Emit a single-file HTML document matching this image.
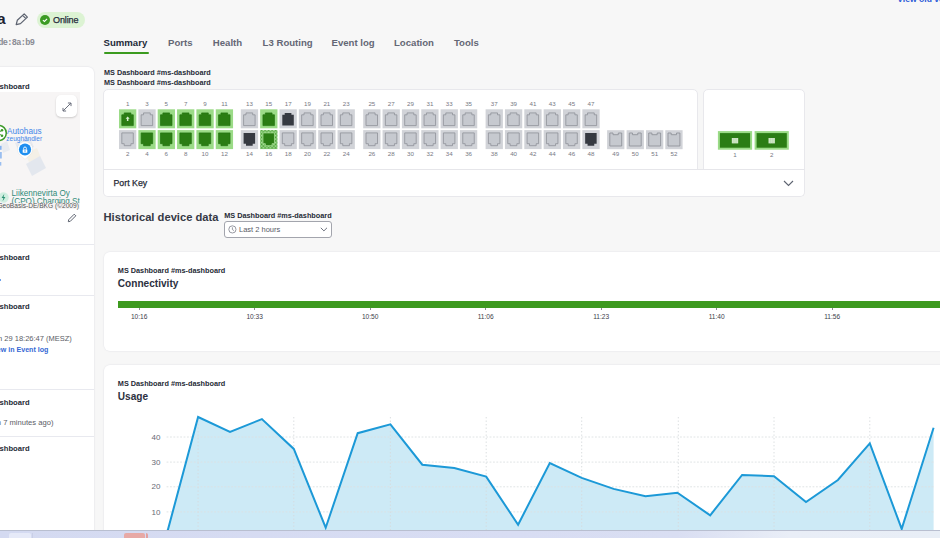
<!DOCTYPE html>
<html><head><meta charset="utf-8"><style>
html,body{margin:0;padding:0;width:940px;height:538px;overflow:hidden;background:#f7f7f7;font-family:'Liberation Sans', sans-serif;}
.t{position:absolute;white-space:nowrap;}
</style></head><body>
<div class="t" style="left:-3.00px;top:10.93px;font-size:15.5px;line-height:15.5px;color:#1c2230;font-weight:700;font-family:'Liberation Sans', sans-serif;">a</div><svg style="position:absolute;left:14px;top:12px" width="16" height="16" viewBox="0 0 16 16">
<path d="M2.2 12.6 L3.3 8.3 L10.2 1.9 L13.4 5.1 L6.5 11.6 Z M8.7 3.4 L11.9 6.6" fill="none" stroke="#5d6370" stroke-width="1.25" stroke-linejoin="round"/></svg><div style="position:absolute;left:37.00px;top:12.00px;width:48.00px;height:15.50px;background:#dcf3d3;border-radius:8px;"></div><svg style="position:absolute;left:39.5px;top:14.7px" width="10" height="10" viewBox="0 0 10 10">
<circle cx="5" cy="5" r="5" fill="#3b9b23"/><path d="M2.9 5.2 L4.4 6.5 L7.1 3.9" fill="none" stroke="#fff" stroke-width="1.1"/></svg><div class="t" style="left:53.00px;top:15.75px;font-size:9px;line-height:9px;color:#23283a;font-weight:400;font-family:'Liberation Sans', sans-serif;letter-spacing:-0.1px;-webkit-text-stroke:0.25px #23283a;">Online</div><div class="t" style="left:-15.20px;top:39.29px;font-size:8.6px;line-height:8.6px;color:#8a8c94;font-weight:700;font-family:'Liberation Mono', monospace;letter-spacing:-0.66px;">f6:de:8a:b9</div><div class="t" style="left:897.20px;top:-5.01px;font-size:8.6px;line-height:8.6px;color:#2a5ad8;font-weight:700;font-family:'Liberation Sans', sans-serif;">View old version</div><div class="t" style="left:103.50px;top:38.04px;font-size:9.6px;line-height:9.6px;color:#242a38;font-weight:700;font-family:'Liberation Sans', sans-serif;">Summary</div><div class="t" style="left:168.00px;top:38.04px;font-size:9.6px;line-height:9.6px;color:#646775;font-weight:700;font-family:'Liberation Sans', sans-serif;">Ports</div><div class="t" style="left:212.80px;top:38.04px;font-size:9.6px;line-height:9.6px;color:#646775;font-weight:700;font-family:'Liberation Sans', sans-serif;">Health</div><div class="t" style="left:262.60px;top:38.04px;font-size:9.6px;line-height:9.6px;color:#646775;font-weight:700;font-family:'Liberation Sans', sans-serif;">L3 Routing</div><div class="t" style="left:331.50px;top:38.04px;font-size:9.6px;line-height:9.6px;color:#646775;font-weight:700;font-family:'Liberation Sans', sans-serif;">Event log</div><div class="t" style="left:394.00px;top:38.04px;font-size:9.6px;line-height:9.6px;color:#646775;font-weight:700;font-family:'Liberation Sans', sans-serif;">Location</div><div class="t" style="left:453.90px;top:38.04px;font-size:9.6px;line-height:9.6px;color:#646775;font-weight:700;font-family:'Liberation Sans', sans-serif;">Tools</div><div style="position:absolute;left:103.90px;top:51.60px;width:44.70px;height:2.20px;background:#3b9b1f;border-radius:1.1px;"></div><div style="position:absolute;left:-10.00px;top:67.00px;width:103.90px;height:480.00px;background:#fff;border-radius:6px;box-shadow:0 0 0 0.5px #e9e9ee,0 0 3px rgba(0,0,0,0.05);"></div><div class="t" style="left:-23.60px;top:82.94px;font-size:7.6px;line-height:7.6px;color:#262b36;font-weight:700;font-family:'Liberation Sans', sans-serif;">MS Dashboard</div><div style="position:absolute;left:0.00px;top:92.00px;width:79.80px;height:117.00px;background:#f7f5f5;overflow:hidden;"></div><svg style="position:absolute;left:0;top:92px" width="80" height="117" viewBox="0 92 80 117">
<polygon points="15,143 30,138 34,147 19,152" fill="#e6e9ef"/>
<polygon points="1,144 7,141 10,150 3,153" fill="#e8ebf0"/>
<polygon points="25,153 37,148 41,158 29,162" fill="#f4f0e6"/>
<polygon points="26,164 40,156 46,168 32,176" fill="#e3e7ee"/>
<rect x="0" y="145.8" width="1.6" height="4" fill="#5c9aec" opacity="0.75"/>
<rect x="0" y="152" width="1.8" height="6.5" fill="#5c9aec" opacity="0.6"/>
<rect x="0" y="162" width="1.3" height="3.6" fill="#5c9aec" opacity="0.6"/>
</svg><div style="position:absolute;left:55.60px;top:94.70px;width:21.60px;height:22.30px;background:#fff;border-radius:5px;box-shadow:0 1px 2px rgba(0,0,0,0.18);"></div><svg style="position:absolute;left:60.5px;top:100.5px" width="12" height="12" viewBox="0 0 12 12">
<path d="M2 10 L10 2 M6.9 2 H10 V5.1 M2 6.9 V10 H5.1" fill="none" stroke="#6a6f7c" stroke-width="1"/></svg><div class="t" style="left:7.00px;top:127.63px;font-size:8.2px;line-height:8.2px;color:#3f86e8;font-weight:400;font-family:'Liberation Sans', sans-serif;">Autohaus</div><div class="t" style="left:6.30px;top:135.67px;font-size:6.5px;line-height:6.5px;color:#3f86e8;font-weight:400;font-family:'Liberation Sans', sans-serif;">zeughändler</div><svg style="position:absolute;left:-10px;top:124px" width="18" height="18" viewBox="0 0 18 18">
<circle cx="8.7" cy="9" r="7.6" fill="#fff" stroke="#3d9a2a" stroke-width="1.5"/>
<circle cx="12" cy="6.3" r="1.3" fill="#3d9a2a"/><circle cx="12" cy="11.7" r="1.3" fill="#3d9a2a"/><circle cx="8" cy="9" r="1.3" fill="#3d9a2a"/>
<path d="M8 9 L12 6.3 M8 9 L12 11.7" stroke="#3d9a2a" stroke-width="0.9"/></svg><svg style="position:absolute;left:16.4px;top:140.7px" width="18" height="19" viewBox="0 0 18 19">
<path d="M9 18.3 L3.6 13.6 A7.6 7.6 0 1 1 14.4 13.6 Z" fill="#fff" stroke="rgba(0,0,0,0.08)" stroke-width="0.6"/>
<circle cx="9" cy="8.5" r="6.1" fill="#1e8ff0"/>
<rect x="6.7" y="8.4" width="4.6" height="3.4" rx="0.4" fill="#fff"/><path d="M7.6 8.5 V7.4 A1.4 1.4 0 0 1 10.4 7.4 V8.5" fill="none" stroke="#fff" stroke-width="0.9"/>
<rect x="8" y="9.6" width="2" height="0.8" fill="#1e8ff0"/></svg><svg style="position:absolute;left:-2.1px;top:191.8px" width="11" height="11" viewBox="0 0 11 11">
<circle cx="5.5" cy="5.5" r="5.2" fill="#cfeee0"/><path d="M6.3 1.8 L3.6 6 H5.4 L4.6 9.2 L7.4 5 H5.6 Z" fill="#2b8f72"/></svg><div class="t" style="left:11.60px;top:190.17px;font-size:8.15px;line-height:8.15px;color:#2e8a78;font-weight:400;font-family:'Liberation Sans', sans-serif;">Liikennevirta Oy</div><div style="position:absolute;left:0;top:190px;width:79.8px;height:19px;overflow:hidden"><div class="t" style="left:11.6px;top:7.97px;font-size:8.15px;line-height:8.15px;color:#2e8a78;font-family:'Liberation Sans', sans-serif">(CPO) Charging Station</div></div><div style="position:absolute;left:0.00px;top:202.60px;width:79.80px;height:6.60px;background:#f5f4f4;"></div><div class="t" style="left:-2.60px;top:202.79px;font-size:6.6px;line-height:6.6px;color:#555;font-weight:400;font-family:'Liberation Sans', sans-serif;">GeoBasis-DE/BKG (©2009)</div><svg style="position:absolute;left:66.5px;top:213px" width="10" height="10" viewBox="0 0 10 10">
<path d="M7.2 1.2 L8.8 2.8 L3.3 8.3 L1.3 8.7 L1.7 6.7 Z" fill="none" stroke="#5d6370" stroke-width="1"/></svg><div style="position:absolute;left:0.00px;top:244.00px;width:93.90px;height:1.20px;background:#e8e9ef;"></div><div style="position:absolute;left:0.00px;top:295.00px;width:93.90px;height:1.20px;background:#e8e9ef;"></div><div style="position:absolute;left:0.00px;top:388.60px;width:93.90px;height:1.20px;background:#e8e9ef;"></div><div style="position:absolute;left:0.00px;top:435.60px;width:93.90px;height:1.20px;background:#e8e9ef;"></div><div class="t" style="left:-23.60px;top:253.54px;font-size:7.6px;line-height:7.6px;color:#262b36;font-weight:700;font-family:'Liberation Sans', sans-serif;">MS Dashboard</div><div class="t" style="left:-23.60px;top:303.34px;font-size:7.6px;line-height:7.6px;color:#262b36;font-weight:700;font-family:'Liberation Sans', sans-serif;">MS Dashboard</div><div class="t" style="left:-23.60px;top:398.54px;font-size:7.6px;line-height:7.6px;color:#262b36;font-weight:700;font-family:'Liberation Sans', sans-serif;">MS Dashboard</div><div class="t" style="left:-23.60px;top:444.84px;font-size:7.6px;line-height:7.6px;color:#262b36;font-weight:700;font-family:'Liberation Sans', sans-serif;">MS Dashboard</div><div style="position:absolute;left:-1.00px;top:278.80px;width:2.20px;height:2.20px;background:#3d83e6;border-radius:1px;"></div><div class="t" style="left:-9.90px;top:335.23px;font-size:7.5px;line-height:7.5px;color:#5a5c66;font-weight:400;font-family:'Liberation Sans', sans-serif;">Jun 29 18:26:47 (MESZ)</div><div class="t" style="left:-9.80px;top:346.66px;font-size:7.1px;line-height:7.1px;color:#3568d4;font-weight:700;font-family:'Liberation Sans', sans-serif;">View in Event log</div><div class="t" style="left:-34.40px;top:418.94px;font-size:7.6px;line-height:7.6px;color:#5a5c66;font-weight:400;font-family:'Liberation Sans', sans-serif;">(Last seen 7 minutes ago)</div><div class="t" style="left:104.00px;top:68.64px;font-size:7.25px;line-height:7.25px;color:#262b36;font-weight:700;font-family:'Liberation Sans', sans-serif;">MS Dashboard #ms-dashboard</div><div class="t" style="left:104.00px;top:78.74px;font-size:7.25px;line-height:7.25px;color:#262b36;font-weight:700;font-family:'Liberation Sans', sans-serif;">MS Dashboard #ms-dashboard</div><div style="position:absolute;left:103.40px;top:89.00px;width:594.80px;height:80.70px;background:#fff;border:1px solid #e8e8ec;border-radius:5px 5px 0 0;box-sizing:border-box;"></div><div style="position:absolute;left:703.40px;top:89.00px;width:101.40px;height:80.70px;background:#fff;border:1px solid #e8e8ec;border-radius:5px 5px 0 0;box-sizing:border-box;"></div><div style="position:absolute;left:103.40px;top:169.20px;width:701.40px;height:27.60px;background:#fff;border:1px solid #e8e8ec;border-top:1px solid #e6e6ea;border-radius:0 0 5px 5px;box-sizing:border-box;"></div><div class="t" style="left:113.50px;top:178.72px;font-size:8.8px;line-height:8.8px;color:#262a36;font-weight:400;font-family:'Liberation Sans', sans-serif;-webkit-text-stroke:0.25px #262a36;">Port Key</div><svg style="position:absolute;left:782.5px;top:179.5px" width="11" height="7" viewBox="0 0 11 7">
<path d="M1 1 L5.5 5.5 L10 1" fill="none" stroke="#5d6370" stroke-width="1.1"/></svg><svg style="position:absolute;left:0;top:0" width="940" height="200" viewBox="0 0 940 200"><defs><pattern id="hat" width="1.4" height="1.4" patternUnits="userSpaceOnUse"><rect width="1.4" height="1.4" fill="#3f9a2a"/><rect width="0.7" height="0.7" fill="#b5e6a5"/><rect x="0.7" y="0.7" width="0.7" height="0.7" fill="#b5e6a5"/></pattern></defs><rect x="119.00" y="109.30" width="17.3" height="19.0" fill="#9bdb87"/><path d="M121.80 114.80 H124.20 V112.90 H130.90 V114.80 H133.30 V125.60 H121.80 Z" fill="#2b7d14" stroke="#237410" stroke-width="0.7"/><rect x="119.00" y="130.10" width="17.3" height="19.0" fill="#d1d3d8"/><path d="M121.80 132.90 H133.30 V143.70 H130.90 V145.70 H124.20 V143.70 H121.80 Z" fill="#c6c9cf" stroke="#8e9198" stroke-width="0.8"/><rect x="138.35" y="109.30" width="17.3" height="19.0" fill="#d1d3d8"/><path d="M141.15 114.80 H143.55 V112.90 H150.25 V114.80 H152.65 V125.60 H141.15 Z" fill="#c6c9cf" stroke="#8e9198" stroke-width="0.8"/><rect x="138.35" y="130.10" width="17.3" height="19.0" fill="#9bdb87"/><path d="M141.15 132.90 H152.65 V143.70 H150.25 V145.70 H143.55 V143.70 H141.15 Z" fill="#2b7d14" stroke="#237410" stroke-width="0.7"/><rect x="157.70" y="109.30" width="17.3" height="19.0" fill="#9bdb87"/><path d="M160.50 114.80 H162.90 V112.90 H169.60 V114.80 H172.00 V125.60 H160.50 Z" fill="#2b7d14" stroke="#237410" stroke-width="0.7"/><rect x="157.70" y="130.10" width="17.3" height="19.0" fill="#9bdb87"/><path d="M160.50 132.90 H172.00 V143.70 H169.60 V145.70 H162.90 V143.70 H160.50 Z" fill="#2b7d14" stroke="#237410" stroke-width="0.7"/><rect x="177.05" y="109.30" width="17.3" height="19.0" fill="#9bdb87"/><path d="M179.85 114.80 H182.25 V112.90 H188.95 V114.80 H191.35 V125.60 H179.85 Z" fill="#2b7d14" stroke="#237410" stroke-width="0.7"/><rect x="177.05" y="130.10" width="17.3" height="19.0" fill="#9bdb87"/><path d="M179.85 132.90 H191.35 V143.70 H188.95 V145.70 H182.25 V143.70 H179.85 Z" fill="#2b7d14" stroke="#237410" stroke-width="0.7"/><rect x="196.40" y="109.30" width="17.3" height="19.0" fill="#9bdb87"/><path d="M199.20 114.80 H201.60 V112.90 H208.30 V114.80 H210.70 V125.60 H199.20 Z" fill="#2b7d14" stroke="#237410" stroke-width="0.7"/><rect x="196.40" y="130.10" width="17.3" height="19.0" fill="#9bdb87"/><path d="M199.20 132.90 H210.70 V143.70 H208.30 V145.70 H201.60 V143.70 H199.20 Z" fill="#2b7d14" stroke="#237410" stroke-width="0.7"/><rect x="215.75" y="109.30" width="17.3" height="19.0" fill="#9bdb87"/><path d="M218.55 114.80 H220.95 V112.90 H227.65 V114.80 H230.05 V125.60 H218.55 Z" fill="#2b7d14" stroke="#237410" stroke-width="0.7"/><rect x="215.75" y="130.10" width="17.3" height="19.0" fill="#9bdb87"/><path d="M218.55 132.90 H230.05 V143.70 H227.65 V145.70 H220.95 V143.70 H218.55 Z" fill="#2b7d14" stroke="#237410" stroke-width="0.7"/><rect x="240.80" y="109.30" width="17.3" height="19.0" fill="#d1d3d8"/><path d="M243.60 114.80 H246.00 V112.90 H252.70 V114.80 H255.10 V125.60 H243.60 Z" fill="#c6c9cf" stroke="#8e9198" stroke-width="0.8"/><rect x="240.80" y="130.10" width="17.3" height="19.0" fill="#d1d3d8"/><path d="M243.60 132.90 H255.10 V143.70 H252.70 V145.70 H246.00 V143.70 H243.60 Z" fill="#363a41"/><rect x="260.15" y="109.30" width="17.3" height="19.0" fill="#9bdb87"/><path d="M262.95 114.80 H265.35 V112.90 H272.05 V114.80 H274.45 V125.60 H262.95 Z" fill="#2b7d14" stroke="#237410" stroke-width="0.7"/><rect x="260.15" y="130.10" width="17.3" height="19.0" fill="url(#hat)"/><path d="M262.95 132.90 H274.45 V143.70 H272.05 V145.70 H265.35 V143.70 H262.95 Z" fill="#2b7d14" stroke="#a8e096" stroke-width="0.8"/><rect x="279.50" y="109.30" width="17.3" height="19.0" fill="#d1d3d8"/><path d="M282.30 114.80 H284.70 V112.90 H291.40 V114.80 H293.80 V125.60 H282.30 Z" fill="#363a41"/><rect x="279.50" y="130.10" width="17.3" height="19.0" fill="#d1d3d8"/><path d="M282.30 132.90 H293.80 V143.70 H291.40 V145.70 H284.70 V143.70 H282.30 Z" fill="#c6c9cf" stroke="#8e9198" stroke-width="0.8"/><rect x="298.85" y="109.30" width="17.3" height="19.0" fill="#d1d3d8"/><path d="M301.65 114.80 H304.05 V112.90 H310.75 V114.80 H313.15 V125.60 H301.65 Z" fill="#c6c9cf" stroke="#8e9198" stroke-width="0.8"/><rect x="298.85" y="130.10" width="17.3" height="19.0" fill="#d1d3d8"/><path d="M301.65 132.90 H313.15 V143.70 H310.75 V145.70 H304.05 V143.70 H301.65 Z" fill="#c6c9cf" stroke="#8e9198" stroke-width="0.8"/><rect x="318.20" y="109.30" width="17.3" height="19.0" fill="#d1d3d8"/><path d="M321.00 114.80 H323.40 V112.90 H330.10 V114.80 H332.50 V125.60 H321.00 Z" fill="#c6c9cf" stroke="#8e9198" stroke-width="0.8"/><rect x="318.20" y="130.10" width="17.3" height="19.0" fill="#d1d3d8"/><path d="M321.00 132.90 H332.50 V143.70 H330.10 V145.70 H323.40 V143.70 H321.00 Z" fill="#c6c9cf" stroke="#8e9198" stroke-width="0.8"/><rect x="337.55" y="109.30" width="17.3" height="19.0" fill="#d1d3d8"/><path d="M340.35 114.80 H342.75 V112.90 H349.45 V114.80 H351.85 V125.60 H340.35 Z" fill="#c6c9cf" stroke="#8e9198" stroke-width="0.8"/><rect x="337.55" y="130.10" width="17.3" height="19.0" fill="#d1d3d8"/><path d="M340.35 132.90 H351.85 V143.70 H349.45 V145.70 H342.75 V143.70 H340.35 Z" fill="#c6c9cf" stroke="#8e9198" stroke-width="0.8"/><rect x="363.20" y="109.30" width="17.3" height="19.0" fill="#d1d3d8"/><path d="M366.00 114.80 H368.40 V112.90 H375.10 V114.80 H377.50 V125.60 H366.00 Z" fill="#c6c9cf" stroke="#8e9198" stroke-width="0.8"/><rect x="363.20" y="130.10" width="17.3" height="19.0" fill="#d1d3d8"/><path d="M366.00 132.90 H377.50 V143.70 H375.10 V145.70 H368.40 V143.70 H366.00 Z" fill="#c6c9cf" stroke="#8e9198" stroke-width="0.8"/><rect x="382.55" y="109.30" width="17.3" height="19.0" fill="#d1d3d8"/><path d="M385.35 114.80 H387.75 V112.90 H394.45 V114.80 H396.85 V125.60 H385.35 Z" fill="#c6c9cf" stroke="#8e9198" stroke-width="0.8"/><rect x="382.55" y="130.10" width="17.3" height="19.0" fill="#d1d3d8"/><path d="M385.35 132.90 H396.85 V143.70 H394.45 V145.70 H387.75 V143.70 H385.35 Z" fill="#c6c9cf" stroke="#8e9198" stroke-width="0.8"/><rect x="401.90" y="109.30" width="17.3" height="19.0" fill="#d1d3d8"/><path d="M404.70 114.80 H407.10 V112.90 H413.80 V114.80 H416.20 V125.60 H404.70 Z" fill="#c6c9cf" stroke="#8e9198" stroke-width="0.8"/><rect x="401.90" y="130.10" width="17.3" height="19.0" fill="#d1d3d8"/><path d="M404.70 132.90 H416.20 V143.70 H413.80 V145.70 H407.10 V143.70 H404.70 Z" fill="#c6c9cf" stroke="#8e9198" stroke-width="0.8"/><rect x="421.25" y="109.30" width="17.3" height="19.0" fill="#d1d3d8"/><path d="M424.05 114.80 H426.45 V112.90 H433.15 V114.80 H435.55 V125.60 H424.05 Z" fill="#c6c9cf" stroke="#8e9198" stroke-width="0.8"/><rect x="421.25" y="130.10" width="17.3" height="19.0" fill="#d1d3d8"/><path d="M424.05 132.90 H435.55 V143.70 H433.15 V145.70 H426.45 V143.70 H424.05 Z" fill="#c6c9cf" stroke="#8e9198" stroke-width="0.8"/><rect x="440.60" y="109.30" width="17.3" height="19.0" fill="#d1d3d8"/><path d="M443.40 114.80 H445.80 V112.90 H452.50 V114.80 H454.90 V125.60 H443.40 Z" fill="#c6c9cf" stroke="#8e9198" stroke-width="0.8"/><rect x="440.60" y="130.10" width="17.3" height="19.0" fill="#d1d3d8"/><path d="M443.40 132.90 H454.90 V143.70 H452.50 V145.70 H445.80 V143.70 H443.40 Z" fill="#c6c9cf" stroke="#8e9198" stroke-width="0.8"/><rect x="459.95" y="109.30" width="17.3" height="19.0" fill="#d1d3d8"/><path d="M462.75 114.80 H465.15 V112.90 H471.85 V114.80 H474.25 V125.60 H462.75 Z" fill="#c6c9cf" stroke="#8e9198" stroke-width="0.8"/><rect x="459.95" y="130.10" width="17.3" height="19.0" fill="#d1d3d8"/><path d="M462.75 132.90 H474.25 V143.70 H471.85 V145.70 H465.15 V143.70 H462.75 Z" fill="#c6c9cf" stroke="#8e9198" stroke-width="0.8"/><rect x="485.60" y="109.30" width="17.3" height="19.0" fill="#d1d3d8"/><path d="M488.40 114.80 H490.80 V112.90 H497.50 V114.80 H499.90 V125.60 H488.40 Z" fill="#c6c9cf" stroke="#8e9198" stroke-width="0.8"/><rect x="485.60" y="130.10" width="17.3" height="19.0" fill="#d1d3d8"/><path d="M488.40 132.90 H499.90 V143.70 H497.50 V145.70 H490.80 V143.70 H488.40 Z" fill="#c6c9cf" stroke="#8e9198" stroke-width="0.8"/><rect x="504.95" y="109.30" width="17.3" height="19.0" fill="#d1d3d8"/><path d="M507.75 114.80 H510.15 V112.90 H516.85 V114.80 H519.25 V125.60 H507.75 Z" fill="#c6c9cf" stroke="#8e9198" stroke-width="0.8"/><rect x="504.95" y="130.10" width="17.3" height="19.0" fill="#d1d3d8"/><path d="M507.75 132.90 H519.25 V143.70 H516.85 V145.70 H510.15 V143.70 H507.75 Z" fill="#c6c9cf" stroke="#8e9198" stroke-width="0.8"/><rect x="524.30" y="109.30" width="17.3" height="19.0" fill="#d1d3d8"/><path d="M527.10 114.80 H529.50 V112.90 H536.20 V114.80 H538.60 V125.60 H527.10 Z" fill="#c6c9cf" stroke="#8e9198" stroke-width="0.8"/><rect x="524.30" y="130.10" width="17.3" height="19.0" fill="#d1d3d8"/><path d="M527.10 132.90 H538.60 V143.70 H536.20 V145.70 H529.50 V143.70 H527.10 Z" fill="#c6c9cf" stroke="#8e9198" stroke-width="0.8"/><rect x="543.65" y="109.30" width="17.3" height="19.0" fill="#d1d3d8"/><path d="M546.45 114.80 H548.85 V112.90 H555.55 V114.80 H557.95 V125.60 H546.45 Z" fill="#c6c9cf" stroke="#8e9198" stroke-width="0.8"/><rect x="543.65" y="130.10" width="17.3" height="19.0" fill="#d1d3d8"/><path d="M546.45 132.90 H557.95 V143.70 H555.55 V145.70 H548.85 V143.70 H546.45 Z" fill="#c6c9cf" stroke="#8e9198" stroke-width="0.8"/><rect x="563.00" y="109.30" width="17.3" height="19.0" fill="#d1d3d8"/><path d="M565.80 114.80 H568.20 V112.90 H574.90 V114.80 H577.30 V125.60 H565.80 Z" fill="#c6c9cf" stroke="#8e9198" stroke-width="0.8"/><rect x="563.00" y="130.10" width="17.3" height="19.0" fill="#d1d3d8"/><path d="M565.80 132.90 H577.30 V143.70 H574.90 V145.70 H568.20 V143.70 H565.80 Z" fill="#c6c9cf" stroke="#8e9198" stroke-width="0.8"/><rect x="582.35" y="109.30" width="17.3" height="19.0" fill="#d1d3d8"/><path d="M585.15 114.80 H587.55 V112.90 H594.25 V114.80 H596.65 V125.60 H585.15 Z" fill="#c6c9cf" stroke="#8e9198" stroke-width="0.8"/><rect x="582.35" y="130.10" width="17.3" height="19.0" fill="#d1d3d8"/><path d="M585.15 132.90 H596.65 V143.70 H594.25 V145.70 H587.55 V143.70 H585.15 Z" fill="#363a41"/><path d="M127.65 116.50 L125.60 118.70 H126.90 V121.10 H128.40 V118.70 H129.70 Z" fill="#d9f0d0"/><rect x="607.10" y="130.20" width="17.3" height="19.0" fill="#d1d3d8"/><path d="M609.80 133.00 H613.00 V134.70 H618.30 V133.00 H621.70 V146.00 H609.80 Z" fill="#c6c9cf" stroke="#8e9198" stroke-width="0.85"/><rect x="626.60" y="130.20" width="17.3" height="19.0" fill="#d1d3d8"/><path d="M629.30 133.00 H632.50 V134.70 H637.80 V133.00 H641.20 V146.00 H629.30 Z" fill="#c6c9cf" stroke="#8e9198" stroke-width="0.85"/><rect x="646.00" y="130.20" width="17.3" height="19.0" fill="#d1d3d8"/><path d="M648.70 133.00 H651.90 V134.70 H657.20 V133.00 H660.60 V146.00 H648.70 Z" fill="#c6c9cf" stroke="#8e9198" stroke-width="0.85"/><rect x="665.30" y="130.20" width="17.3" height="19.0" fill="#d1d3d8"/><path d="M668.00 133.00 H671.20 V134.70 H676.50 V133.00 H679.90 V146.00 H668.00 Z" fill="#c6c9cf" stroke="#8e9198" stroke-width="0.85"/><rect x="717.90" y="131.10" width="34.2" height="18.6" fill="#9bdb87"/><rect x="719.90" y="133.10" width="30.2" height="14.6" fill="#2b7d14"/><rect x="731.80" y="138.00" width="6.4" height="5.4" fill="#cfe6c6"/><path d="M733.90 138.10 V143.30 M736.10 138.10 V143.30" stroke="#a9cf9c" stroke-width="0.4"/><rect x="754.60" y="131.10" width="34.2" height="18.6" fill="#9bdb87"/><rect x="756.60" y="133.10" width="30.2" height="14.6" fill="#2b7d14"/><rect x="768.50" y="138.00" width="6.4" height="5.4" fill="#cfe6c6"/><path d="M770.60 138.10 V143.30 M772.80 138.10 V143.30" stroke="#a9cf9c" stroke-width="0.4"/></svg><div class="t" style="left:127.65px;transform:translateX(-50%);top:100.83px;font-size:6.2px;line-height:6.2px;color:#777983;font-weight:400;font-family:'Liberation Sans', sans-serif;">1</div><div class="t" style="left:127.65px;transform:translateX(-50%);top:150.93px;font-size:6.2px;line-height:6.2px;color:#777983;font-weight:400;font-family:'Liberation Sans', sans-serif;">2</div><div class="t" style="left:147.00px;transform:translateX(-50%);top:100.83px;font-size:6.2px;line-height:6.2px;color:#777983;font-weight:400;font-family:'Liberation Sans', sans-serif;">3</div><div class="t" style="left:147.00px;transform:translateX(-50%);top:150.93px;font-size:6.2px;line-height:6.2px;color:#777983;font-weight:400;font-family:'Liberation Sans', sans-serif;">4</div><div class="t" style="left:166.35px;transform:translateX(-50%);top:100.83px;font-size:6.2px;line-height:6.2px;color:#777983;font-weight:400;font-family:'Liberation Sans', sans-serif;">5</div><div class="t" style="left:166.35px;transform:translateX(-50%);top:150.93px;font-size:6.2px;line-height:6.2px;color:#777983;font-weight:400;font-family:'Liberation Sans', sans-serif;">6</div><div class="t" style="left:185.70px;transform:translateX(-50%);top:100.83px;font-size:6.2px;line-height:6.2px;color:#777983;font-weight:400;font-family:'Liberation Sans', sans-serif;">7</div><div class="t" style="left:185.70px;transform:translateX(-50%);top:150.93px;font-size:6.2px;line-height:6.2px;color:#777983;font-weight:400;font-family:'Liberation Sans', sans-serif;">8</div><div class="t" style="left:205.05px;transform:translateX(-50%);top:100.83px;font-size:6.2px;line-height:6.2px;color:#777983;font-weight:400;font-family:'Liberation Sans', sans-serif;">9</div><div class="t" style="left:205.05px;transform:translateX(-50%);top:150.93px;font-size:6.2px;line-height:6.2px;color:#777983;font-weight:400;font-family:'Liberation Sans', sans-serif;">10</div><div class="t" style="left:224.40px;transform:translateX(-50%);top:100.83px;font-size:6.2px;line-height:6.2px;color:#777983;font-weight:400;font-family:'Liberation Sans', sans-serif;">11</div><div class="t" style="left:224.40px;transform:translateX(-50%);top:150.93px;font-size:6.2px;line-height:6.2px;color:#777983;font-weight:400;font-family:'Liberation Sans', sans-serif;">12</div><div class="t" style="left:249.45px;transform:translateX(-50%);top:100.83px;font-size:6.2px;line-height:6.2px;color:#777983;font-weight:400;font-family:'Liberation Sans', sans-serif;">13</div><div class="t" style="left:249.45px;transform:translateX(-50%);top:150.93px;font-size:6.2px;line-height:6.2px;color:#777983;font-weight:400;font-family:'Liberation Sans', sans-serif;">14</div><div class="t" style="left:268.80px;transform:translateX(-50%);top:100.83px;font-size:6.2px;line-height:6.2px;color:#777983;font-weight:400;font-family:'Liberation Sans', sans-serif;">15</div><div class="t" style="left:268.80px;transform:translateX(-50%);top:150.93px;font-size:6.2px;line-height:6.2px;color:#777983;font-weight:400;font-family:'Liberation Sans', sans-serif;">16</div><div class="t" style="left:288.15px;transform:translateX(-50%);top:100.83px;font-size:6.2px;line-height:6.2px;color:#777983;font-weight:400;font-family:'Liberation Sans', sans-serif;">17</div><div class="t" style="left:288.15px;transform:translateX(-50%);top:150.93px;font-size:6.2px;line-height:6.2px;color:#777983;font-weight:400;font-family:'Liberation Sans', sans-serif;">18</div><div class="t" style="left:307.50px;transform:translateX(-50%);top:100.83px;font-size:6.2px;line-height:6.2px;color:#777983;font-weight:400;font-family:'Liberation Sans', sans-serif;">19</div><div class="t" style="left:307.50px;transform:translateX(-50%);top:150.93px;font-size:6.2px;line-height:6.2px;color:#777983;font-weight:400;font-family:'Liberation Sans', sans-serif;">20</div><div class="t" style="left:326.85px;transform:translateX(-50%);top:100.83px;font-size:6.2px;line-height:6.2px;color:#777983;font-weight:400;font-family:'Liberation Sans', sans-serif;">21</div><div class="t" style="left:326.85px;transform:translateX(-50%);top:150.93px;font-size:6.2px;line-height:6.2px;color:#777983;font-weight:400;font-family:'Liberation Sans', sans-serif;">22</div><div class="t" style="left:346.20px;transform:translateX(-50%);top:100.83px;font-size:6.2px;line-height:6.2px;color:#777983;font-weight:400;font-family:'Liberation Sans', sans-serif;">23</div><div class="t" style="left:346.20px;transform:translateX(-50%);top:150.93px;font-size:6.2px;line-height:6.2px;color:#777983;font-weight:400;font-family:'Liberation Sans', sans-serif;">24</div><div class="t" style="left:371.85px;transform:translateX(-50%);top:100.83px;font-size:6.2px;line-height:6.2px;color:#777983;font-weight:400;font-family:'Liberation Sans', sans-serif;">25</div><div class="t" style="left:371.85px;transform:translateX(-50%);top:150.93px;font-size:6.2px;line-height:6.2px;color:#777983;font-weight:400;font-family:'Liberation Sans', sans-serif;">26</div><div class="t" style="left:391.20px;transform:translateX(-50%);top:100.83px;font-size:6.2px;line-height:6.2px;color:#777983;font-weight:400;font-family:'Liberation Sans', sans-serif;">27</div><div class="t" style="left:391.20px;transform:translateX(-50%);top:150.93px;font-size:6.2px;line-height:6.2px;color:#777983;font-weight:400;font-family:'Liberation Sans', sans-serif;">28</div><div class="t" style="left:410.55px;transform:translateX(-50%);top:100.83px;font-size:6.2px;line-height:6.2px;color:#777983;font-weight:400;font-family:'Liberation Sans', sans-serif;">29</div><div class="t" style="left:410.55px;transform:translateX(-50%);top:150.93px;font-size:6.2px;line-height:6.2px;color:#777983;font-weight:400;font-family:'Liberation Sans', sans-serif;">30</div><div class="t" style="left:429.90px;transform:translateX(-50%);top:100.83px;font-size:6.2px;line-height:6.2px;color:#777983;font-weight:400;font-family:'Liberation Sans', sans-serif;">31</div><div class="t" style="left:429.90px;transform:translateX(-50%);top:150.93px;font-size:6.2px;line-height:6.2px;color:#777983;font-weight:400;font-family:'Liberation Sans', sans-serif;">32</div><div class="t" style="left:449.25px;transform:translateX(-50%);top:100.83px;font-size:6.2px;line-height:6.2px;color:#777983;font-weight:400;font-family:'Liberation Sans', sans-serif;">33</div><div class="t" style="left:449.25px;transform:translateX(-50%);top:150.93px;font-size:6.2px;line-height:6.2px;color:#777983;font-weight:400;font-family:'Liberation Sans', sans-serif;">34</div><div class="t" style="left:468.60px;transform:translateX(-50%);top:100.83px;font-size:6.2px;line-height:6.2px;color:#777983;font-weight:400;font-family:'Liberation Sans', sans-serif;">35</div><div class="t" style="left:468.60px;transform:translateX(-50%);top:150.93px;font-size:6.2px;line-height:6.2px;color:#777983;font-weight:400;font-family:'Liberation Sans', sans-serif;">36</div><div class="t" style="left:494.25px;transform:translateX(-50%);top:100.83px;font-size:6.2px;line-height:6.2px;color:#777983;font-weight:400;font-family:'Liberation Sans', sans-serif;">37</div><div class="t" style="left:494.25px;transform:translateX(-50%);top:150.93px;font-size:6.2px;line-height:6.2px;color:#777983;font-weight:400;font-family:'Liberation Sans', sans-serif;">38</div><div class="t" style="left:513.60px;transform:translateX(-50%);top:100.83px;font-size:6.2px;line-height:6.2px;color:#777983;font-weight:400;font-family:'Liberation Sans', sans-serif;">39</div><div class="t" style="left:513.60px;transform:translateX(-50%);top:150.93px;font-size:6.2px;line-height:6.2px;color:#777983;font-weight:400;font-family:'Liberation Sans', sans-serif;">40</div><div class="t" style="left:532.95px;transform:translateX(-50%);top:100.83px;font-size:6.2px;line-height:6.2px;color:#777983;font-weight:400;font-family:'Liberation Sans', sans-serif;">41</div><div class="t" style="left:532.95px;transform:translateX(-50%);top:150.93px;font-size:6.2px;line-height:6.2px;color:#777983;font-weight:400;font-family:'Liberation Sans', sans-serif;">42</div><div class="t" style="left:552.30px;transform:translateX(-50%);top:100.83px;font-size:6.2px;line-height:6.2px;color:#777983;font-weight:400;font-family:'Liberation Sans', sans-serif;">43</div><div class="t" style="left:552.30px;transform:translateX(-50%);top:150.93px;font-size:6.2px;line-height:6.2px;color:#777983;font-weight:400;font-family:'Liberation Sans', sans-serif;">44</div><div class="t" style="left:571.65px;transform:translateX(-50%);top:100.83px;font-size:6.2px;line-height:6.2px;color:#777983;font-weight:400;font-family:'Liberation Sans', sans-serif;">45</div><div class="t" style="left:571.65px;transform:translateX(-50%);top:150.93px;font-size:6.2px;line-height:6.2px;color:#777983;font-weight:400;font-family:'Liberation Sans', sans-serif;">46</div><div class="t" style="left:591.00px;transform:translateX(-50%);top:100.83px;font-size:6.2px;line-height:6.2px;color:#777983;font-weight:400;font-family:'Liberation Sans', sans-serif;">47</div><div class="t" style="left:591.00px;transform:translateX(-50%);top:150.93px;font-size:6.2px;line-height:6.2px;color:#777983;font-weight:400;font-family:'Liberation Sans', sans-serif;">48</div><div class="t" style="left:615.75px;transform:translateX(-50%);top:151.23px;font-size:6.2px;line-height:6.2px;color:#777983;font-weight:400;font-family:'Liberation Sans', sans-serif;">49</div><div class="t" style="left:635.25px;transform:translateX(-50%);top:151.23px;font-size:6.2px;line-height:6.2px;color:#777983;font-weight:400;font-family:'Liberation Sans', sans-serif;">50</div><div class="t" style="left:654.65px;transform:translateX(-50%);top:151.23px;font-size:6.2px;line-height:6.2px;color:#777983;font-weight:400;font-family:'Liberation Sans', sans-serif;">51</div><div class="t" style="left:673.95px;transform:translateX(-50%);top:151.23px;font-size:6.2px;line-height:6.2px;color:#777983;font-weight:400;font-family:'Liberation Sans', sans-serif;">52</div><div class="t" style="left:735.00px;transform:translateX(-50%);top:151.73px;font-size:6.2px;line-height:6.2px;color:#777983;font-weight:400;font-family:'Liberation Sans', sans-serif;">1</div><div class="t" style="left:771.70px;transform:translateX(-50%);top:151.73px;font-size:6.2px;line-height:6.2px;color:#777983;font-weight:400;font-family:'Liberation Sans', sans-serif;">2</div><div class="t" style="left:103.50px;top:212.28px;font-size:11.2px;line-height:11.2px;color:#353945;font-weight:700;font-family:'Liberation Sans', sans-serif;">Historical device data</div><div class="t" style="left:224.20px;top:212.19px;font-size:7.3px;line-height:7.3px;color:#262b36;font-weight:700;font-family:'Liberation Sans', sans-serif;">MS Dashboard #ms-dashboard</div><div style="position:absolute;left:224.20px;top:221.00px;width:107.40px;height:16.80px;background:#fff;border:1px solid #a3a5ad;border-radius:3px;box-sizing:border-box;"></div><svg style="position:absolute;left:228.3px;top:224.9px" width="9" height="9" viewBox="0 0 9 9">
<circle cx="4.4" cy="4.4" r="3.6" fill="none" stroke="#7d808a" stroke-width="0.8"/><path d="M4.4 2.3 V4.6 L5.9 5.6" fill="none" stroke="#7d808a" stroke-width="0.8"/></svg><div class="t" style="left:239.00px;top:225.82px;font-size:7.5px;line-height:7.5px;color:#575a66;font-weight:400;font-family:'Liberation Sans', sans-serif;">Last 2 hours</div><svg style="position:absolute;left:320px;top:227px" width="8" height="5" viewBox="0 0 8 5">
<path d="M0.8 0.8 L3.9 3.9 L7 0.8" fill="none" stroke="#5d6370" stroke-width="0.9"/></svg><div style="position:absolute;left:103.60px;top:251.80px;width:900.00px;height:99.00px;background:#fff;border-radius:6px;box-shadow:0 0 0 0.5px #ebebef,0 0 3px rgba(0,0,0,0.05);"></div><div class="t" style="left:117.80px;top:267.00px;font-size:7.3px;line-height:7.3px;color:#262b36;font-weight:700;font-family:'Liberation Sans', sans-serif;">MS Dashboard #ms-dashboard</div><div class="t" style="left:117.80px;top:278.62px;font-size:10.1px;line-height:10.1px;color:#2c3040;font-weight:700;font-family:'Liberation Sans', sans-serif;">Connectivity</div><div style="position:absolute;left:117.90px;top:301.00px;width:830.00px;height:6.60px;background:#3d9a1f;"></div><div style="position:absolute;left:138.80px;top:307.60px;width:0.80px;height:2.20px;background:#8a8c94;"></div><div class="t" style="left:139.20px;transform:translateX(-50%);top:313.99px;font-size:6.6px;line-height:6.6px;color:#3d404a;font-weight:400;font-family:'Liberation Sans', sans-serif;">10:16</div><div style="position:absolute;left:254.30px;top:307.60px;width:0.80px;height:2.20px;background:#8a8c94;"></div><div class="t" style="left:254.70px;transform:translateX(-50%);top:313.99px;font-size:6.6px;line-height:6.6px;color:#3d404a;font-weight:400;font-family:'Liberation Sans', sans-serif;">10:33</div><div style="position:absolute;left:369.80px;top:307.60px;width:0.80px;height:2.20px;background:#8a8c94;"></div><div class="t" style="left:370.20px;transform:translateX(-50%);top:313.99px;font-size:6.6px;line-height:6.6px;color:#3d404a;font-weight:400;font-family:'Liberation Sans', sans-serif;">10:50</div><div style="position:absolute;left:485.30px;top:307.60px;width:0.80px;height:2.20px;background:#8a8c94;"></div><div class="t" style="left:485.70px;transform:translateX(-50%);top:313.99px;font-size:6.6px;line-height:6.6px;color:#3d404a;font-weight:400;font-family:'Liberation Sans', sans-serif;">11:06</div><div style="position:absolute;left:600.80px;top:307.60px;width:0.80px;height:2.20px;background:#8a8c94;"></div><div class="t" style="left:601.20px;transform:translateX(-50%);top:313.99px;font-size:6.6px;line-height:6.6px;color:#3d404a;font-weight:400;font-family:'Liberation Sans', sans-serif;">11:23</div><div style="position:absolute;left:716.30px;top:307.60px;width:0.80px;height:2.20px;background:#8a8c94;"></div><div class="t" style="left:716.70px;transform:translateX(-50%);top:313.99px;font-size:6.6px;line-height:6.6px;color:#3d404a;font-weight:400;font-family:'Liberation Sans', sans-serif;">11:40</div><div style="position:absolute;left:831.80px;top:307.60px;width:0.80px;height:2.20px;background:#8a8c94;"></div><div class="t" style="left:832.20px;transform:translateX(-50%);top:313.99px;font-size:6.6px;line-height:6.6px;color:#3d404a;font-weight:400;font-family:'Liberation Sans', sans-serif;">11:56</div><div style="position:absolute;left:103.60px;top:365.00px;width:900.00px;height:300.00px;background:#fff;border-radius:6px;box-shadow:0 0 0 0.5px #ebebef,0 0 3px rgba(0,0,0,0.05);"></div><div class="t" style="left:117.80px;top:380.40px;font-size:7.3px;line-height:7.3px;color:#262b36;font-weight:700;font-family:'Liberation Sans', sans-serif;">MS Dashboard #ms-dashboard</div><div class="t" style="left:117.80px;top:392.22px;font-size:10.1px;line-height:10.1px;color:#2c3040;font-weight:700;font-family:'Liberation Sans', sans-serif;">Usage</div><div class="t" style="right:779.60px;top:433.60px;font-size:8.0px;line-height:8.0px;color:#676a75;font-weight:400;font-family:'Liberation Sans', sans-serif;">40</div><div class="t" style="right:779.60px;top:458.70px;font-size:8.0px;line-height:8.0px;color:#676a75;font-weight:400;font-family:'Liberation Sans', sans-serif;">30</div><div class="t" style="right:779.60px;top:483.40px;font-size:8.0px;line-height:8.0px;color:#676a75;font-weight:400;font-family:'Liberation Sans', sans-serif;">20</div><div class="t" style="right:779.60px;top:508.50px;font-size:8.0px;line-height:8.0px;color:#676a75;font-weight:400;font-family:'Liberation Sans', sans-serif;">10</div><svg style="position:absolute;left:0;top:0" width="940" height="538" viewBox="0 0 940 538"><path d="M135.9,600 L135.9,582 L167.9,529.8 L198.1,417 L230,431.9 L261.9,419.1 L293.8,448.9 L325.7,527.7 L357.7,433.2 L390.4,424.3 L422.3,464.7 L454.3,468.1 L486.2,476.6 L518.1,524.7 L549.8,463 L581.7,477.9 L613.6,488.9 L645.5,496.2 L677.4,492.8 L710.2,515.3 L742.1,474.9 L774,476.2 L806,502.1 L837.9,480 L869.8,443.4 L901.7,528.9 L933.6,427.7 L933.6,600 Z" fill="#cdeaf6"/><line x1="166.6" y1="437" x2="934" y2="437" stroke="#dde1e2" stroke-width="0.9" stroke-dasharray="1.8 1.6"/><line x1="166.6" y1="462.1" x2="934" y2="462.1" stroke="#dde1e2" stroke-width="0.9" stroke-dasharray="1.8 1.6"/><line x1="166.6" y1="486.8" x2="934" y2="486.8" stroke="#dde1e2" stroke-width="0.9" stroke-dasharray="1.8 1.6"/><line x1="166.6" y1="511.9" x2="934" y2="511.9" stroke="#dde1e2" stroke-width="0.9" stroke-dasharray="1.8 1.6"/><line x1="198.1" y1="417" x2="198.1" y2="540" stroke="#d6dadc" stroke-width="0.9" stroke-dasharray="1.4 2.1"/><line x1="293.8" y1="417" x2="293.8" y2="540" stroke="#d6dadc" stroke-width="0.9" stroke-dasharray="1.4 2.1"/><line x1="390.4" y1="417" x2="390.4" y2="540" stroke="#d6dadc" stroke-width="0.9" stroke-dasharray="1.4 2.1"/><line x1="486.2" y1="417" x2="486.2" y2="540" stroke="#d6dadc" stroke-width="0.9" stroke-dasharray="1.4 2.1"/><line x1="581.7" y1="417" x2="581.7" y2="540" stroke="#d6dadc" stroke-width="0.9" stroke-dasharray="1.4 2.1"/><line x1="678.3" y1="417" x2="678.3" y2="540" stroke="#d6dadc" stroke-width="0.9" stroke-dasharray="1.4 2.1"/><line x1="774" y1="417" x2="774" y2="540" stroke="#d6dadc" stroke-width="0.9" stroke-dasharray="1.4 2.1"/><line x1="869.8" y1="417" x2="869.8" y2="540" stroke="#d6dadc" stroke-width="0.9" stroke-dasharray="1.4 2.1"/><polyline points="135.9,582 167.9,529.8 198.1,417 230,431.9 261.9,419.1 293.8,448.9 325.7,527.7 357.7,433.2 390.4,424.3 422.3,464.7 454.3,468.1 486.2,476.6 518.1,524.7 549.8,463 581.7,477.9 613.6,488.9 645.5,496.2 677.4,492.8 710.2,515.3 742.1,474.9 774,476.2 806,502.1 837.9,480 869.8,443.4 901.7,528.9 933.6,427.7" fill="none" stroke="#1c99d7" stroke-width="2.0" stroke-linejoin="miter"/></svg><div style="position:absolute;left:0.00px;top:530.00px;width:940.00px;height:8.00px;background:linear-gradient(90deg,#d4daf1 0%,#d8ddf3 55%,#d9def2 72%,#e9eef7 84%,#e8eef6 100%);border-top:1px solid #b9bfd0;box-sizing:border-box;"></div><div style="position:absolute;left:8.90px;top:533.40px;width:22.60px;height:6.00px;background:#e6eaf8;border-radius:2px 2px 0 0;"></div><div style="position:absolute;left:31.80px;top:533.40px;width:1.60px;height:6.00px;background:#c9cfe6;"></div><div style="position:absolute;left:123.90px;top:533.40px;width:21.00px;height:6.00px;background:#e7a9a6;border-radius:2px 2px 0 0;"></div><div style="position:absolute;left:145.50px;top:533.40px;width:2.60px;height:6.00px;background:#e2a0a0;border-radius:0 3px 0 0;"></div>
</body></html>
